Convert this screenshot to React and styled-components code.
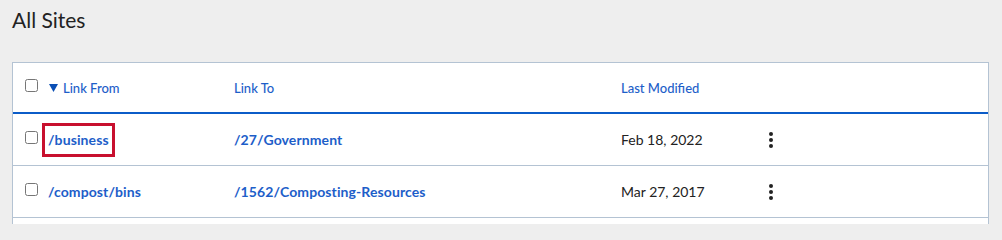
import React from "react";
import styled, { createGlobalStyle } from "styled-components";

const GlobalStyle = createGlobalStyle`
  html, body {
    margin: 0;
    padding: 0;
    background: #eeeeee;
    font-family: Lato, "Open Sans", sans-serif;
  }
`;

const Page = styled.main`
  height: 224px;
  overflow: hidden;
  padding: 0 13px 0 12px;
`;

const Title = styled.h1`
  margin: 0;
  padding-top: 6px;
  height: 56px;
  font-size: 21px;
  font-weight: 400;
  color: #222;
  line-height: 28px;
`;

const Table = styled.div`
  background: #fff;
  border: 1px solid #b4c3d3;
  border-bottom: none;
  min-height: 200px;
`;

const Row = styled.div`
  display: grid;
  grid-template-columns: 23px 186px 387px 150px 1fr;
  align-items: center;
  padding-left: 12px;
  height: ${(p) => (p.$head ? "49px" : "51px")};
  border-bottom: ${(p) => (p.$head ? "2px solid #0b5cc8" : "1px solid #b4c3d3")};
`;

const Check = styled.input.attrs({ type: "checkbox" })`
  margin: 0;
  width: 13px;
  height: 13px;
  position: relative;
  top: -2px;
`;

const HeadLabel = styled.span`
  display: flex;
  align-items: center;
  gap: 5px;
  font-size: 13px;
  color: #1d5ec9;
  font-weight: 500;
`;

const Arrow = styled.svg`
  width: 9px;
  height: 8px;
  margin-left: 1px;
`;

const Cell = styled.span`
  font-size: 14px;
  font-weight: ${(p) => (p.$date ? 400 : 700)};
  color: ${(p) => (p.$date ? "#222" : "#1d5ec9")};
  letter-spacing: ${(p) => (p.$date ? "0" : "0.1px")};
`;

const Highlight = styled.span`
  display: inline-block;
  margin-left: -6px;
  padding: 5px 3px 6px;
  border: 3px solid #c8102e;
`;

const Kebab = styled.svg`
  width: 6px;
  height: 18px;
  margin-left: -3px;
`;

const Dots = () => (
  <Kebab viewBox="0 0 6 18">
    <circle cx="3" cy="3" r="2" fill="#222" />
    <circle cx="3" cy="9" r="2" fill="#222" />
    <circle cx="3" cy="15" r="2" fill="#222" />
  </Kebab>
);

const rows = [
  { from: "/business", to: "/27/Government", date: "Feb 18, 2022", marked: true },
  { from: "/compost/bins", to: "/1562/Composting-Resources", date: "Mar 27, 2017" },
];

export default function App() {
  return (
    <Page>
      <GlobalStyle />
      <Title>All Sites</Title>
      <Table>
        <Row $head>
          <Check />
          <HeadLabel>
            <Arrow viewBox="0 0 9 8">
              <polygon points="0,0 9,0 4.5,8" fill="#0b4fb5" />
            </Arrow>
            Link From
          </HeadLabel>
          <HeadLabel>Link To</HeadLabel>
          <HeadLabel>Last Modified</HeadLabel>
          <span />
        </Row>
        {rows.map((r) => (
          <Row key={r.from}>
            <Check />
            <Cell>{r.marked ? <Highlight>{r.from}</Highlight> : r.from}</Cell>
            <Cell>{r.to}</Cell>
            <Cell $date>{r.date}</Cell>
            <Dots />
          </Row>
        ))}
      </Table>
    </Page>
  );
}
